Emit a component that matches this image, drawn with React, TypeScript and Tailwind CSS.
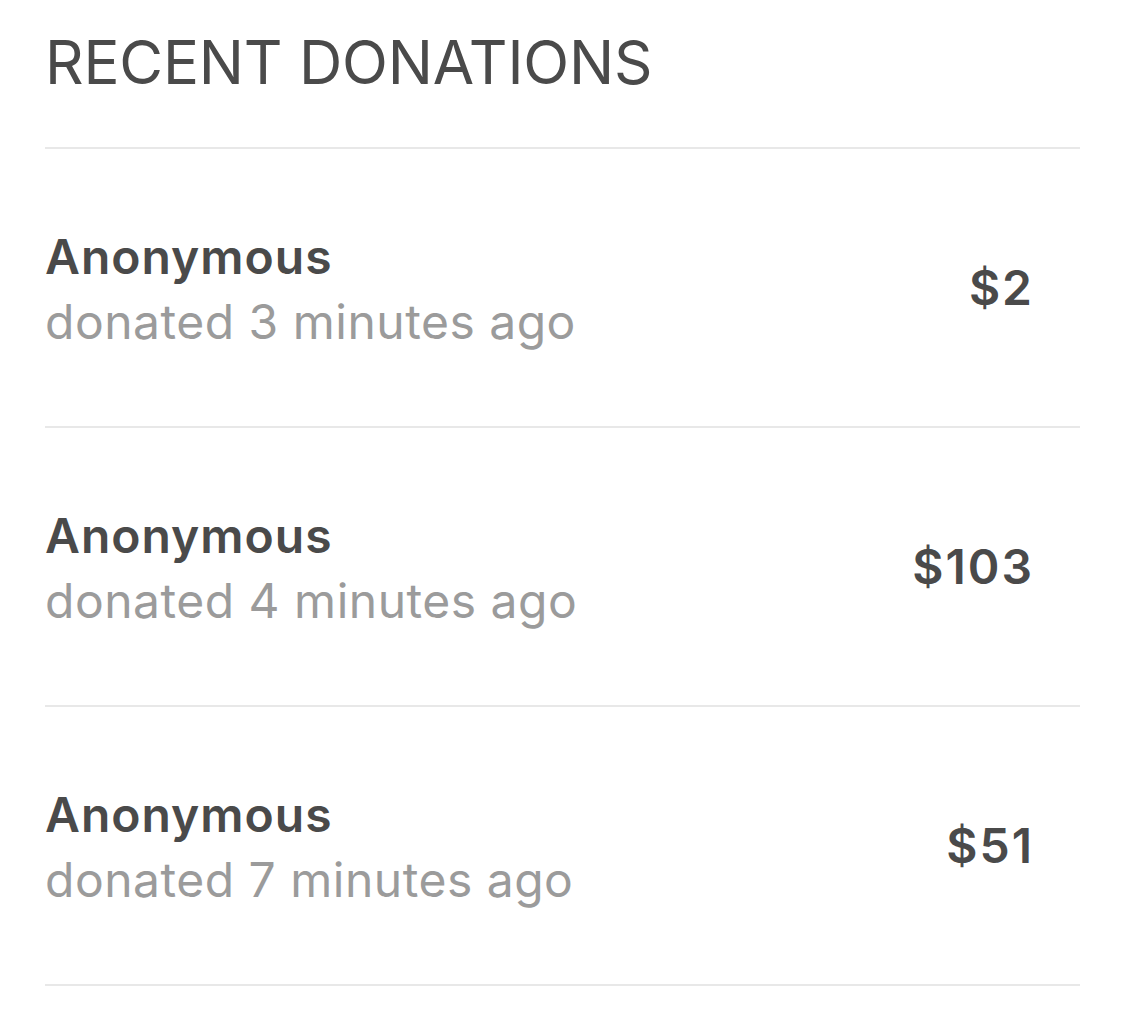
const donations = [
  { name: 'Anonymous', when: 'donated 3 minutes ago', amount: '$2' },
  { name: 'Anonymous', when: 'donated 4 minutes ago', amount: '$103' },
  { name: 'Anonymous', when: 'donated 7 minutes ago', amount: '$51' },
]

export default function App() {
  return (
    <div className="min-h-screen bg-white px-[45px] font-['Inter',sans-serif]">
      <h2 className="border-b-2 border-[#e8e8e8] pt-8 pb-[55px] text-[60px] leading-[60px] font-normal tracking-[-0.2px] text-[#4a4a4a]">
        RECENT DONATIONS
      </h2>
      {donations.map((d, i) => (
        <div
          key={i}
          className="flex h-[279px] items-center justify-between border-b-2 border-[#e8e8e8] pr-12"
        >
          <div className="pt-[3px]">
            <div className="text-[48px] leading-[65px] font-semibold tracking-[1px] text-[#4a4a4a]">{d.name}</div>
            <div className="text-[48px] leading-[65px] tracking-[0.5px] text-[#9b9b9b]">{d.when}</div>
          </div>
          <div className="-mr-[2px] text-[48px] leading-[65px] font-semibold tracking-[2px] text-[#4a4a4a]">{d.amount}</div>
        </div>
      ))}
    </div>
  )
}
